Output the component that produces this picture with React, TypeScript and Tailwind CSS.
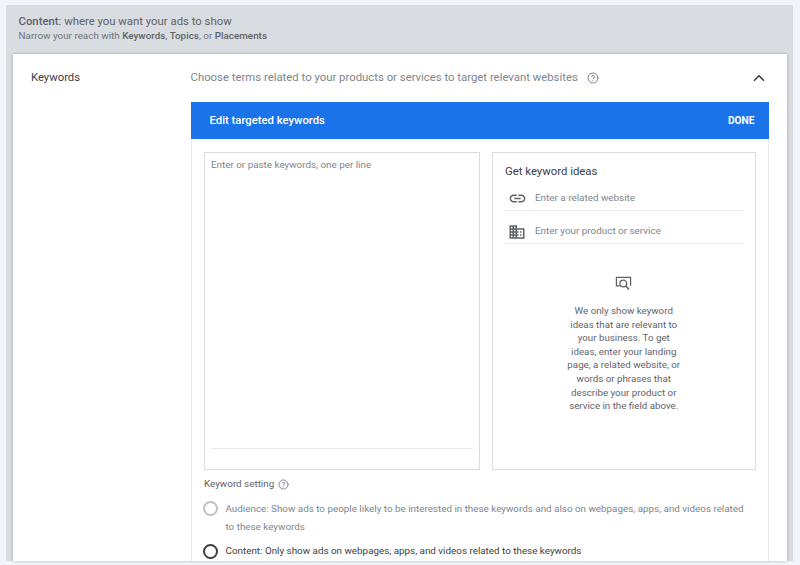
import { ChevronUp, CircleHelp } from "lucide-react";

const Building = () => (
  <svg viewBox="0 0 24 24" className="w-[18px] h-[18px] fill-[#5f6368]">
    <path d="M12 7V3H2v18h20V7H12zM6 19H4v-2h2v2zm0-4H4v-2h2v2zm0-4H4V9h2v2zm0-4H4V5h2v2zm4 12H8v-2h2v2zm0-4H8v-2h2v2zm0-4H8V9h2v2zm0-4H8V5h2v2zm10 12h-8v-2h2v-2h-2v-2h2v-2h-2V9h8v10zm-2-8h-2v2h2v-2zm0 4h-2v2h2v-2z" />
  </svg>
);

const LinkIcon = () => (
  <svg viewBox="0 0 24 24" className="w-[19px] h-[19px] fill-[#5f6368]">
    <path d="M3.9 12c0-1.71 1.39-3.1 3.1-3.1h4V7H7c-2.76 0-5 2.24-5 5s2.24 5 5 5h4v-1.9H7c-1.71 0-3.1-1.39-3.1-3.1zM8 13h8v-2H8v2zm9-6h-4v1.9h4c1.71 0 3.1 1.39 3.1 3.1s-1.39 3.1-3.1 3.1h-4V17h4c2.76 0 5-2.24 5-5s-2.24-5-5-5z" />
  </svg>
);

const SearchFrame = () => (
  <svg viewBox="0 0 18 18" fill="none" stroke="#5f6368" className="w-[17px] h-[17px]">
    <path d="M5 11.5H1.5V2.5h15v9" strokeWidth="1.3" />
    <circle cx="8.8" cy="9" r="3.6" strokeWidth="1.4" />
    <path d="M11.4 11.6l3.4 3.8" strokeWidth="1.7" />
  </svg>
);

function IdeaField({ icon, label }: { icon: React.ReactNode; label: string }) {
  return (
    <div className="flex items-center h-[33px] pt-[9px] border-b border-[#e8eaed]">
      <div className="w-[30px] pl-[3px] flex items-center">{icon}</div>
      <span className="text-[#80868b] text-[9.9px]">{label}</span>
    </div>
  );
}

export default function App() {
  return (
    <div className="h-[565px] w-[800px] overflow-hidden bg-[#f1f4f8] pt-[5px] pl-[6px] font-['Roboto',sans-serif]">
      <div className="w-[787px] h-[556px] bg-[#d9dce0] pl-[7px] pr-[6px] flex flex-col">
        <div className="h-[49px] pl-[5.5px] pt-[9px]">
          <p className="text-[11.35px] leading-[14px] text-[#5f6368]">
            <b className="font-medium">Content</b>: where you want your ads to show
          </p>
          <p className="text-[9.87px] leading-[13px] mt-[1px] text-[#70757a]">
            Narrow your reach with <b className="font-medium text-[#5f6368]">Keywords</b>,{" "}
            <b className="font-medium text-[#5f6368]">Topics</b>, or{" "}
            <b className="font-medium text-[#5f6368]">Placements</b>
          </p>
        </div>

        <div className="flex-1 bg-white shadow-[0_0_3px_rgba(60,64,67,0.35)] flex overflow-hidden">
          <div className="w-[177.5px] shrink-0 pl-[18px] pt-[16px] text-[11.3px] leading-[16px] text-[#3c4043]">
            Keywords
          </div>
          <div className="flex-1 min-w-0 flex flex-col">
            <div className="h-[48px] flex items-center pb-[1px] pr-[19px] text-[11.35px] text-[#80868b]">
              <span>Choose terms related to your products or services to target relevant websites</span>
              <CircleHelp size={12} strokeWidth={1.6} className="ml-[9px] text-[#5f6368]" />
              <ChevronUp size={18} strokeWidth={2.2} className="ml-auto text-[#3c4043]" />
            </div>

            <div className="w-[578px] flex-1 border-x border-[#e8eaed] flex flex-col">
              <div className="h-[37px] -mx-px bg-[#1a73e8] flex items-center justify-between pl-[19px] pr-[14px] text-white">
                <span className="text-[11.3px] font-medium pt-[1px]">Edit targeted keywords</span>
                <span className="text-[10.2px] font-bold pt-[1px]">DONE</span>
              </div>

              <div className="flex gap-[12px] pt-[13px] pl-[12px]">
                <div className="w-[276px] h-[318px] border border-[#dadce0] flex flex-col pl-[6.5px] pr-[6px]">
                  <div className="flex-1 pt-[5px] text-[9.85px] text-[#80868b]">
                    Enter or paste keywords, one per line
                  </div>
                  <div className="h-[21px] border-t border-[#e8eaed]" />
                </div>

                <div className="w-[264px] h-[318px] border border-[#dadce0] pl-[12.5px] pr-[12px] pt-[11px]">
                  <p className="text-[11.35px] leading-[14px] text-[#3c4043]">Get keyword ideas</p>
                  <IdeaField icon={<LinkIcon />} label="Enter a related website" />
                  <IdeaField icon={<Building />} label="Enter your product or service" />
                  <div className="flex flex-col items-center pt-[31px]">
                    <SearchFrame />
                    <p className="mt-[12px] w-[116px] text-center text-[9.75px] leading-[13.6px] text-[#5f6368]">
                      We only show keyword ideas that are relevant to your business. To get ideas, enter your landing page, a related website, or words or phrases that describe your product or service in the field above.
                    </p>
                  </div>
                </div>
              </div>

              <div className="pl-[12.5px] pt-[8px]">
                <div className="flex items-center text-[9.85px] leading-[12px] text-[#5f6368]">
                  Keyword setting
                  <CircleHelp size={11} strokeWidth={1.6} className="ml-[4px]" />
                </div>
                <div className="flex mt-[10px]">
                  <div className="w-[15px] h-[15px] mt-[1px] -ml-[1.5px] rounded-full border-2 border-[#bdc1c6] shrink-0" />
                  <p className="ml-[8px] w-[522px] text-[9.85px] leading-[18px] text-[#80868b]">
                    Audience: Show ads to people likely to be interested in these keywords and also on webpages, apps, and videos related to these keywords
                  </p>
                </div>
                <div className="flex mt-[7px] items-center">
                  <div className="w-[15px] h-[15px] -ml-[1.5px] rounded-full border-2 border-[#3c4043] shrink-0" />
                  <p className="ml-[8px] text-[9.85px] leading-[16px] text-[#3c4043]">
                    Content: Only show ads on webpages, apps, and videos related to these keywords
                  </p>
                </div>
              </div>
            </div>
          </div>
        </div>
      </div>
    </div>
  );
}
